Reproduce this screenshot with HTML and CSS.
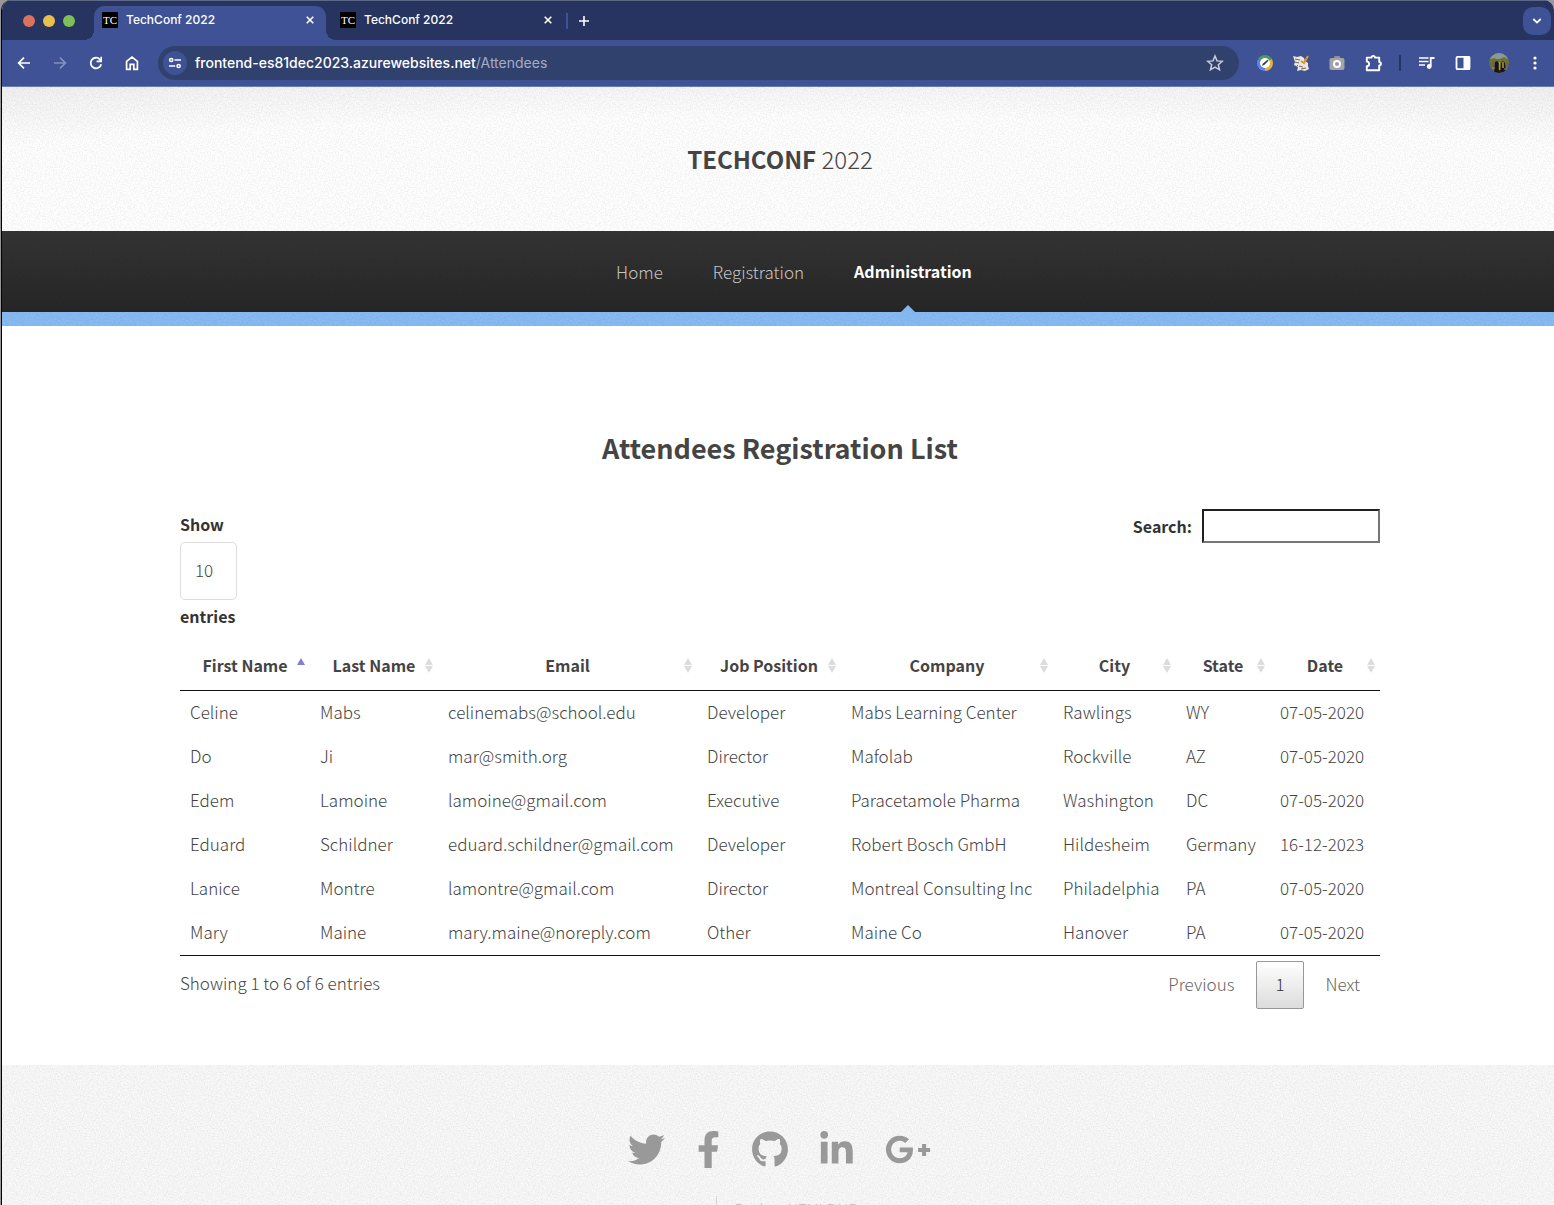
FILE: index.html
```html
<!DOCTYPE html>
<html lang="en">
<head>
<meta charset="utf-8">
<title>TechConf 2022</title>
<link rel="stylesheet" href="styles.css">
</head>
<body>
<div class="window">
  <div class="tab-strip">
    <div class="lights"><span class="light red"></span><span class="light yellow"></span><span class="light green"></span></div>
    <div class="tab active">
      <span class="favicon">TC</span><span class="tab-title">TechConf 2022</span>
      <button class="icon-btn close" aria-label="Close tab"><svg width="8" height="8" viewBox="0 0 8 8"><path d="M.7.7l6.6 6.6M7.3.7L.7 7.3" stroke="#fff" stroke-width="1.6"/></svg></button>
    </div>
    <div class="tab">
      <span class="favicon">TC</span><span class="tab-title">TechConf 2022</span>
      <button class="icon-btn close" aria-label="Close tab"><svg width="8" height="8" viewBox="0 0 8 8"><path d="M.7.7l6.6 6.6M7.3.7L.7 7.3" stroke="#fff" stroke-width="1.6"/></svg></button>
    </div>
    <span class="tab-divider"></span>
    <button class="icon-btn new-tab" aria-label="New tab"><svg width="10" height="10" viewBox="0 0 10 10"><path d="M5 0v10M0 5h10" stroke="#fff" stroke-width="1.6"/></svg></button>
    <button class="icon-btn tab-search" aria-label="Search tabs"><svg width="10" height="6" viewBox="0 0 10 6"><path d="M1.3 1L5 4.6 8.7 1" fill="none" stroke="#fff" stroke-width="1.8"/></svg></button>
  </div>

  <div class="toolbar">
    <div class="nav-buttons">
      <button class="icon-btn" aria-label="Back"><svg width="16" height="16" viewBox="0 0 16 16"><path d="M14 8H3M8 2.6L2.6 8 8 13.4" fill="none" stroke="#fff" stroke-width="1.7"/></svg></button>
      <button class="icon-btn" aria-label="Forward"><svg width="16" height="16" viewBox="0 0 16 16"><path d="M2 8h11M8 2.6L13.4 8 8 13.4" fill="none" stroke="#8290bd" stroke-width="1.7"/></svg></button>
      <button class="icon-btn" aria-label="Reload"><svg width="16" height="16" viewBox="0 0 16 16"><path d="M13.2 9.2A5.3 5.3 0 1 1 11.8 4.3L13 5.5" fill="none" stroke="#fff" stroke-width="1.8"/><path d="M14 1.8v5.4H8.6V5.5h3.8V1.8z" fill="#fff"/></svg></button>
      <button class="icon-btn" aria-label="Home"><svg width="16" height="16" viewBox="0 0 16 16"><path d="M2.6 6.3L8 2l5.4 4.3v8H9.8v-5H6.2v5H2.6z" fill="none" stroke="#fff" stroke-width="1.7"/></svg></button>
    </div>
    <div class="omnibox">
      <button class="icon-btn site-info" aria-label="Site information"><svg width="14" height="12" viewBox="0 0 14 12" fill="none" stroke="#fff" stroke-width="1.5"><circle cx="3.2" cy="3" r="1.6"/><path d="M6.5 3H13M1 9h6.2"/><circle cx="10.6" cy="9" r="1.6"/></svg></button>
      <span class="url">frontend-es81dec2023.azurewebsites.net<span class="url-path">/Attendees</span></span>
      <button class="icon-btn star" aria-label="Bookmark this tab"><svg width="18" height="18" viewBox="0 0 18 18"><path d="M9 2l2 4.900 5.300.400-4 3.400 1.200 5.100L9 13.100l-4.500 2.700 1.200-5.100-4-3.400L7 6.900z" fill="none" stroke="#c8cddb" stroke-width="1.500"/></svg></button>
    </div>
    <div class="extensions">
      <button class="icon-btn" aria-label="Browsing extension"><svg width="16" height="16" viewBox="0 0 16 16"><path d="M8 8L1.100 4a8 8 0 0 1 13.800 0z" fill="#4c9a5f"/><path d="M8 8L1.100 4A8 8 0 0 0 8 16z" fill="#5c83ee"/><path d="M8 8l6.900-4A8 8 0 0 1 8 16z" fill="#e2b43c"/><circle cx="8" cy="8" r="5" fill="#fff"/><path d="M5 10.800l1-2.400 4.500-3.600 1 1L7.200 10z" fill="#34373f"/></svg></button>
      <button class="icon-btn" aria-label="Notes extension"><svg width="18" height="16" viewBox="0 0 18 16"><path d="M1 1l4 1 4-1 3 2 1 3 3 2v3l1 3-4 2-4-1-4 1 1-4-4-2 1-3z" fill="#eee6dc"/><path d="M3 4l5 1M3 7l4 1M7 11l4 1M9 14l5-1M5 11l1-1" stroke="#74675c" fill="none"/><path d="M9 6l3 2 4-7" fill="none" stroke="#d49a25" stroke-width="2"/></svg></button>
      <button class="icon-btn" aria-label="Screenshot extension"><svg width="16" height="14" viewBox="0 0 16 14"><rect x="5" width="6" height="4" rx="1" fill="#8d8f96"/><rect x=".5" y="2" width="15" height="12" rx="2" fill="#a3a4a8"/><circle cx="8" cy="8" r="3" fill="#9a9a9d" stroke="#fff" stroke-width="2"/></svg></button>
      <button class="icon-btn" aria-label="Extensions"><svg width="18" height="18" viewBox="0 0 18 18"><path d="M2.800 3.600h4.700a1.700 1.700 0 0 1 3.400 0h4.300V8a1.700 1.700 0 0 1 0 3.400v4.800H2.800v-4a2.300 2.300 0 0 0 0-4.600z" fill="none" stroke="#fff" stroke-width="1.900" stroke-linejoin="round"/></svg></button>
    </div>
    <span class="toolbar-divider"></span>
    <div class="extensions">
      <button class="icon-btn" aria-label="Media controls"><svg width="16" height="14" viewBox="0 0 16 14"><path d="M0 2h9.500M0 5.500h9.500M0 9h6" stroke="#fff" stroke-width="1.700"/><path d="M11.700 10V2H15.500" fill="none" stroke="#fff" stroke-width="1.800"/><circle cx="10.200" cy="10.500" r="2.400" fill="#fff"/></svg></button>
      <button class="icon-btn" aria-label="Side panel"><svg width="16" height="16" viewBox="0 0 16 16"><rect x="1.500" y="1.800" width="13" height="12.400" rx="1" fill="none" stroke="#fff" stroke-width="1.800"/><path d="M8.500 1.500H15v13H8.500z" fill="#fff"/></svg></button>
      <button class="icon-btn" aria-label="Profile"><svg width="20" height="20" viewBox="0 0 20 20"><defs><clipPath id="avatar"><circle cx="10" cy="10" r="10"/></clipPath></defs><g clip-path="url(#avatar)"><path d="M0 0h20v20H0z" fill="#6b6750"/><path d="M0 0h20v6H0z" fill="#8a9896"/><path d="M0 7l5-2 4 2 6-3 5 3v3H0z" fill="#6c7138"/><path d="M5 20l1-11 2-1 2 2 1 10zM11 20l1-10 2-2 2 2 1 10z" fill="#17150f"/><path d="M10.500 9v8M14 9v6" stroke="#b39b2f" stroke-width="1.500"/><path d="M3 15h3M15 16h4" stroke="#a08f71"/></g></svg></button>
      <button class="icon-btn" aria-label="Menu"><svg width="4" height="16" viewBox="0 0 4 16" fill="#fff"><circle cx="2" cy="3" r="1.600"/><circle cx="2" cy="8" r="1.600"/><circle cx="2" cy="13" r="1.600"/></svg></button>
    </div>
  </div>

  <div class="page">
    <header class="site-header"><h1 class="logo"><strong>TECHCONF</strong> 2022</h1></header>
    <nav class="site-nav">
      <a class="nav-link" href="#">Home</a>
      <a class="nav-link" href="#">Registration</a>
      <a class="nav-link current" href="#">Administration</a>
    </nav>
    <div class="banner"></div>

    <main class="content">
      <h2 class="title">Attendees Registration List</h2>
      <div class="controls">
        <label class="length">Show
          <select class="length-select"><option>10</option><option>25</option><option>50</option></select>
          entries</label>
        <label class="search">Search:<input class="search-input" type="search"></label>
      </div>
      <table class="attendees">
        <colgroup><col class="c-first"><col class="c-last"><col class="c-email"><col class="c-job"><col class="c-company"><col class="c-city"><col class="c-state"><col class="c-date"></colgroup>
        <thead>
          <tr><th class="sorted">First Name</th><th>Last Name</th><th>Email</th><th>Job Position</th><th>Company</th><th>City</th><th>State</th><th>Date</th></tr>
        </thead>
        <tbody>
          <tr><td>Celine</td><td>Mabs</td><td>celinemabs@school.edu</td><td>Developer</td><td>Mabs Learning Center</td><td>Rawlings</td><td>WY</td><td>07-05-2020</td></tr>
          <tr><td>Do</td><td>Ji</td><td>mar@smith.org</td><td>Director</td><td>Mafolab</td><td>Rockville</td><td>AZ</td><td>07-05-2020</td></tr>
          <tr><td>Edem</td><td>Lamoine</td><td>lamoine@gmail.com</td><td>Executive</td><td>Paracetamole Pharma</td><td>Washington</td><td>DC</td><td>07-05-2020</td></tr>
          <tr><td>Eduard</td><td>Schildner</td><td>eduard.schildner@gmail.com</td><td>Developer</td><td>Robert Bosch GmbH</td><td>Hildesheim</td><td>Germany</td><td>16-12-2023</td></tr>
          <tr><td>Lanice</td><td>Montre</td><td>lamontre@gmail.com</td><td>Director</td><td>Montreal Consulting Inc</td><td>Philadelphia</td><td>PA</td><td>07-05-2020</td></tr>
          <tr><td>Mary</td><td>Maine</td><td>mary.maine@noreply.com</td><td>Other</td><td>Maine Co</td><td>Hanover</td><td>PA</td><td>07-05-2020</td></tr>
        </tbody>
      </table>
      <div class="table-footer">
        <p class="info">Showing 1 to 6 of 6 entries</p>
        <div class="pager">
          <button class="page-btn">Previous</button>
          <button class="page-btn selected">1</button>
          <button class="page-btn">Next</button>
        </div>
      </div>
    </main>

    <footer class="site-footer">
      <div class="social">
        <a href="#" aria-label="Twitter"><svg width="37" height="37" viewBox="0 0 512 512"><path d="M459.370 151.716c.325 4.548.325 9.097.325 13.645 0 138.720-105.583 298.558-298.558 298.558-59.452 0-114.680-17.219-161.137-47.106 8.447.974 16.568 1.299 25.340 1.299 49.055 0 94.213-16.568 130.274-44.832-46.132-.975-84.792-31.188-98.112-72.772 6.498.974 12.995 1.624 19.818 1.624 9.421 0 18.843-1.300 27.614-3.573-48.081-9.747-84.143-51.980-84.143-102.985v-1.299c13.969 7.797 30.214 12.670 47.431 13.319-28.264-18.843-46.781-51.005-46.781-87.391 0-19.492 5.197-37.360 14.294-52.954 51.655 63.675 129.300 105.258 216.365 109.807-1.624-7.797-2.599-15.918-2.599-24.040 0-57.828 46.782-104.934 104.934-104.934 30.213 0 57.502 12.670 76.670 33.137 23.715-4.548 46.456-13.320 66.599-25.340-7.798 24.366-24.366 44.833-46.132 57.827 21.117-2.273 41.584-8.122 60.426-16.243-14.292 20.791-32.161 39.308-52.628 54.253z"/></svg></a>
        <a href="#" aria-label="Facebook"><svg width="23" height="37" viewBox="0 0 320 512"><path d="M279.140 288l14.220-92.660h-88.910v-60.130c0-25.350 12.420-50.060 52.240-50.060h40.420V6.260S260.430 0 225.360 0c-73.220 0-121.080 44.380-121.080 124.720v70.620H22.890V288h81.390v224h100.170V288z"/></svg></a>
        <a href="#" aria-label="GitHub"><svg width="36" height="37" viewBox="0 0 496 512"><path d="M165.900 397.400c0 2-2.300 3.600-5.200 3.600-3.300.3-5.600-1.300-5.600-3.600 0-2 2.300-3.600 5.200-3.600 3-.3 5.600 1.300 5.600 3.600zM244.800 8C106.100 8 0 113.300 0 252c0 110.900 69.800 205.800 169.500 239.200 12.800 2.300 17.300-5.600 17.300-12.100 0-6.200-.3-40.400-.3-61.400 0 0-70 15-84.700-29.800 0 0-11.400-29.100-27.800-36.600 0 0-22.900-15.700 1.600-15.400 0 0 24.900 2 38.600 25.800 21.900 38.600 58.600 27.500 72.900 20.900 2.300-16 8.800-27.100 16-33.700-55.900-6.200-112.300-14.300-112.300-110.500 0-27.500 7.600-41.300 23.600-58.900-2.600-6.500-11.100-33.300 2.600-67.900 20.900-6.500 69 27 69 27 20-5.600 41.500-8.500 62.800-8.500s42.800 2.900 62.800 8.500c0 0 48.100-33.600 69-27 13.700 34.700 5.200 61.400 2.600 67.900 16 17.700 25.800 31.500 25.800 58.900 0 96.500-58.900 104.200-114.800 110.500 9.200 7.900 17 22.900 17 46.400 0 33.700-.3 75.400-.3 83.600 0 6.500 4.600 14.400 17.300 12.100C428.200 457.800 496 362.900 496 252 496 113.300 383.500 8 244.800 8z"/></svg></a>
        <a href="#" aria-label="LinkedIn"><svg width="33" height="37" viewBox="0 0 448 512"><path d="M100.280 448H7.400V148.900h92.880zM53.790 108.100C24.090 108.100 0 83.500 0 53.800a53.790 53.790 0 0 1 107.580 0c0 29.700-24.100 54.300-53.790 54.300zM447.900 448h-92.680V302.400c0-34.700-.7-79.200-48.290-79.200-48.290 0-55.690 37.700-55.690 76.700V448h-92.780V148.900h89.080v40.800h1.300c12.400-23.500 42.690-48.300 87.880-48.300 94 0 111.280 61.900 111.280 142.300V448z"/></svg></a>
        <a href="#" aria-label="Google Plus"><svg width="46" height="37" viewBox="0 0 640 512"><path d="M386.061 228.496c1.834 9.692 3.143 19.384 3.143 31.956C389.204 370.205 315.599 448 204.800 448c-106.084 0-192-85.915-192-192s85.916-192 192-192c51.864 0 95.083 18.859 128.611 50.292l-52.126 50.030c-14.145-13.621-39.028-29.599-76.485-29.599-65.484 0-118.920 54.221-118.920 121.277 0 67.056 53.436 121.277 118.920 121.277 75.961 0 104.513-54.745 108.965-82.773H204.800v-66.009h181.261zm185.406 6.437V179.200h-56.001v55.733h-55.733v56.001h55.733v55.733h56.001v-55.733H627.200v-56.001h-55.733z"/></svg></a>
      </div>
      <p class="copyright"><span>Design: HTML5 UP</span></p>
    </footer>
  </div>
</div>
</body>
</html>
```

FILE: styles.css
```css
* { box-sizing: border-box; }

:root {
  --sans: "Noto Sans CJK JP", sans-serif;
  --ui: Inter, sans-serif;
  --grain: url("data:image/svg+xml,%3Csvg xmlns='http://www.w3.org/2000/svg' width='128' height='128'%3E%3Cfilter id='n'%3E%3CfeTurbulence type='fractalNoise' baseFrequency='.7' numOctaves='2' stitchTiles='stitch'/%3E%3CfeColorMatrix values='0 0 0 0 0 0 0 0 0 0 0 0 0 0 0 .14 0 0 0 -.05'/%3E%3C/filter%3E%3Crect width='128' height='128' filter='url(%23n)'/%3E%3C/svg%3E");
}

body {
  margin: 0;
  padding-left: 1px;
  overflow: hidden;
  background: #98989c;
}

button { font: inherit; cursor: pointer; }
svg { display: block; }

.window {
  height: 100vh;
  overflow: hidden;
  border-left: 1px solid #000;
  border-radius: 10px 10px 0 0;
  background: #fff;
}

/* Browser chrome */
.icon-btn {
  display: flex;
  align-items: center;
  justify-content: center;
  flex: none;
  padding: 0;
  border: 0;
  background: none;
}

.tab-strip {
  display: flex;
  align-items: center;
  height: 40px;
  padding-right: 3px;
  border-top: 1px solid #5d6786;
  background: #27345f;
  color: #fff;
  font: 500 12px/16px var(--ui);
}

.lights { display: flex; gap: 8px; width: 92px; padding-left: 21px; }
.light { width: 12px; height: 12px; border-radius: 50%; }
.red { background: #d9735c; }
.yellow { background: #e6bf4f; }
.green { background: #7cc057; }

.tab {
  position: relative;
  display: flex;
  align-items: center;
  align-self: flex-end;
  width: 238px;
  height: 34px;
  padding: 0 12px 6px 14px;
}
.tab.active {
  width: 232px;
  padding: 0 12px 6px 8px;
  border-radius: 10px 10px 0 0;
  background: #3e5295;
}
.tab.active::before,
.tab.active::after {
  content: "";
  position: absolute;
  bottom: 0;
  width: 10px;
  height: 10px;
}
.tab.active::before { left: -10px; background: radial-gradient(circle at 0 0, transparent 10px, #3e5295 10px); }
.tab.active::after { right: -10px; background: radial-gradient(circle at 100% 0, transparent 10px, #3e5295 10px); }

.favicon {
  width: 16px;
  height: 16px;
  border-radius: 1px;
  background: #000;
  font: 11px/16px "Liberation Serif", serif;
  text-align: center;
}
.tab-title { flex: 1; padding-left: 8px; }
.tab-divider { width: 2px; height: 16px; margin-left: 2px; background: #3e5295; }
.new-tab { width: 32px; height: 28px; }
.tab-search { width: 28px; height: 28px; margin-left: auto; border-radius: 10px; background: #3e5295; }

.toolbar {
  display: flex;
  align-items: center;
  height: 47px;
  padding-right: 1px;
  border-bottom: 1px solid #6a7ab3;
  background: #3e5295;
}
.nav-buttons, .extensions { display: flex; align-items: center; }
.nav-buttons { padding: 0 8px 0 4px; }
.nav-buttons .icon-btn, .extensions .icon-btn { width: 36px; height: 36px; }

.omnibox {
  display: flex;
  align-items: center;
  flex: 1;
  height: 34px;
  margin-right: 8px;
  padding: 0 15px 0 5px;
  border-radius: 17px;
  background: #31416e;
}
.site-info { width: 24px; height: 24px; border-radius: 50%; background: #3e5295; }
.url { flex: 1; padding-left: 8px; color: #fff; font: 500 14px/20px var(--ui); }
.url-path { color: #a5adc3; font-weight: 400; }
.toolbar-divider { width: 2px; height: 16px; margin: 0 8px; background: #27345f; }

/* Site */
.page {
  margin-right: -4px;
  color: #444;
  font: 300 17px/24px var(--sans);
}

.site-header {
  padding: 52px 0;
  background: var(--grain), radial-gradient(ellipse 100% 130% at 50% 130%, #fff 84%, #f0f0f0 114%);
  text-align: center;
}
.logo { margin: 0; font-size: 24px; font-weight: 300; line-height: 40px; }
.logo strong { font-weight: 700; }

.site-nav {
  display: flex;
  justify-content: center;
  gap: 50px;
  padding-left: 28px;
  background: var(--grain), linear-gradient(#343434, #262626);
}
.nav-link {
  position: relative;
  color: #c4c4c4;
  line-height: 81px;
  text-decoration: none;
}
.nav-link.current { color: #fff; font-size: 16px; font-weight: 700; }
.nav-link.current::after {
  content: "";
  position: absolute;
  bottom: 0;
  left: 50%;
  margin-left: -12px;
  border: 7px solid transparent;
  border-top: 0;
  border-bottom-color: #84b6ef;
}
.banner { height: 14px; background: var(--grain), #88bbf5; }

.content { max-width: 1200px; margin: 0 auto; padding: 102px 0 56px; }
.title { margin: 0 0 41px; font-size: 27px; font-weight: 700; line-height: 40px; text-align: center; }

.controls {
  display: flex;
  align-items: flex-start;
  justify-content: space-between;
  margin-bottom: 10px;
  color: #333;
  font-size: 16px;
  font-weight: 700;
}
.length { line-height: 30px; }
.length-select {
  display: block;
  width: 57px;
  height: 58px;
  margin: 3px 0 1px;
  padding: 0 14px 2px;
  border: 1px solid #ddd;
  border-radius: 5px;
  background: #fff;
  color: #444;
  font: 300 17px/24px var(--sans);
  appearance: none;
}
.search { display: flex; align-items: center; gap: 10px; }
.search-input {
  width: 178px;
  height: 34px;
  padding: 1px 2px;
  border: 2px inset #767676;
  border-radius: 0;
  background: #fff;
  font: inherit;
  appearance: none;
}

.attendees {
  width: 100%;
  border-collapse: separate;
  border-spacing: 0;
  border-bottom: 1px solid #111;
  table-layout: fixed;
}
.c-first { width: 130px; }
.c-last { width: 128px; }
.c-email { width: 259px; }
.c-job { width: 144px; }
.c-company { width: 212px; }
.c-city { width: 123px; }
.c-state { width: 94px; }
.c-date { width: 110px; }

.attendees th {
  height: 50px;
  padding: 0 15px 2px;
  border-bottom: 1px solid #111;
  background: url("data:image/svg+xml,%3Csvg xmlns='http://www.w3.org/2000/svg' width='8' height='15' fill='%23dcdcdc'%3E%3Cpath d='M4 0l4 7H0zM4 15l4-7H0z'/%3E%3C/svg%3E") no-repeat right 5px center;
  font-size: 16px;
  font-weight: 700;
  white-space: nowrap;
}
.attendees th.sorted {
  background-image: url("data:image/svg+xml,%3Csvg xmlns='http://www.w3.org/2000/svg' width='8' height='15' fill='%237f7fd8'%3E%3Cpath d='M4 0l4 7H0z'/%3E%3C/svg%3E");
}
.attendees td { height: 44px; padding: 0 10px 2px; white-space: nowrap; }

.table-footer { display: flex; justify-content: space-between; padding-top: 5px; }
.info { margin: 0; line-height: 44px; }
.pager { display: flex; gap: 2px; }
.page-btn {
  height: 48px;
  padding: 0 19px 2px;
  border: 1px solid transparent;
  border-radius: 2px;
  background: none;
  color: #666;
}
.page-btn.selected { padding: 0 18px 2px; border-color: #979797; background: linear-gradient(#fff, #dcdcdc); color: #333; }

.site-footer { padding: 66px 0 40px; background: var(--grain), #f9f9f9; }
.social { display: flex; justify-content: center; gap: 32px; padding-right: 2px; fill: #999; }
.copyright { display: flex; justify-content: center; margin: 28px 0 0; padding-left: 14px; color: #bbb; font-size: 15px; line-height: 26px; }
.copyright span { padding-left: 17px; border-left: 1px solid #d4d4d4; }
```
